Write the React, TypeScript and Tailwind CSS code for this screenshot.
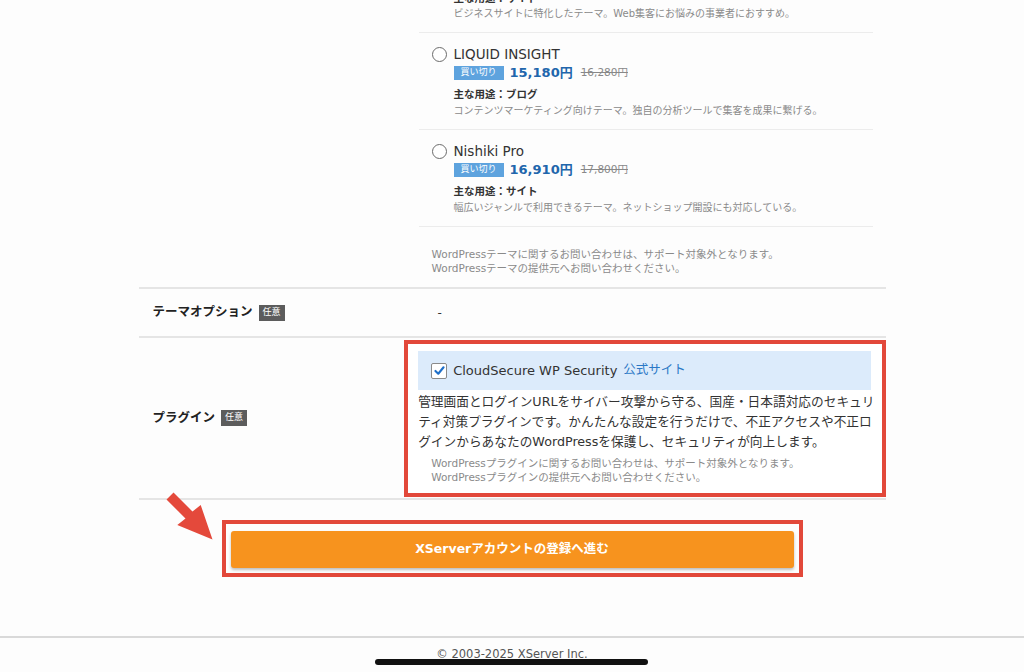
import React from "react"

const themes = [
  {
    name: "LIQUID INSIGHT",
    price: "15,180円",
    regular: "16,280円",
    use: "ブログ",
    desc: "コンテンツマーケティング向けテーマ。独自の分析ツールで集客を成果に繋げる。",
  },
  {
    name: "Nishiki Pro",
    price: "16,910円",
    regular: "17,800円",
    use: "サイト",
    desc: "幅広いジャンルで利用できるテーマ。ネットショップ開設にも対応している。",
  },
]

function OptionalBadge() {
  return (
    <span className="ml-[6px] flex h-[16px] items-center bg-[#5c5c5c] px-[4px] text-[9px] font-normal text-white">
      任意
    </span>
  )
}

function ThemeItem({
  name,
  price,
  regular,
  use,
  desc,
}: {
  name: string
  price: string
  regular: string
  use: string
  desc: string
}) {
  return (
    <div className="border-b border-[#ececec] pt-[12px] pb-[11px]">
      <div className="flex h-[18px] items-center">
        <span className="ml-[13px] h-[15px] w-[15px] rounded-full border-[1.5px] border-[#6b6b6b] bg-white" />
        <span className="ml-[7px] text-[13.5px] text-[#333]">{name}</span>
      </div>
      <div className="mt-[2px] flex h-[16px] items-center pl-[35px]">
        <span className="flex h-[14px] items-center bg-[#5ea3de] px-[7px] text-[9px] text-white">
          買い切り
        </span>
        <span className="ml-[6px] text-[13px] font-bold text-[#2166ac]">{price}</span>
        <span className="ml-[8px] text-[10.5px] text-[#888] line-through">{regular}</span>
      </div>
      <p className="mt-[6px] pl-[35px] text-[10.5px] font-bold leading-[14px] text-[#333]">
        主な用途：{use}
      </p>
      <p className="mt-[3px] pl-[35px] text-[10px] leading-[14px] text-[#8a8a8a]">{desc}</p>
    </div>
  )
}

export default function App() {
  return (
    <div
      className="relative min-h-[672px] overflow-hidden bg-[#fdfdfd]"
      style={{ fontFamily: '"DejaVu Sans", "Noto Sans CJK JP", sans-serif' }}
    >
      <div className="mx-auto w-[747px]">
        {/* theme row */}
        <div className="flex border-b-2 border-[#e5e5e5]">
          <div className="w-[280px]" />
          <div className="w-[467px] pr-[13px]">
            <div className="border-b border-[#ececec] pb-[11px]">
              <p className="-mt-[8px] pl-[35px] text-[10.5px] font-bold leading-[12px] text-[#333]">
                主な用途：サイト
              </p>
              <p className="mt-[3px] pl-[35px] text-[10px] leading-[14px] text-[#8a8a8a]">
                ビジネスサイトに特化したテーマ。Web集客にお悩みの事業者におすすめ。
              </p>
            </div>
            {themes.map((t) => (
              <ThemeItem key={t.name} {...t} />
            ))}
            <div className="pt-[20px] pb-[12px] pl-[13px] text-[10.5px] leading-[14px] text-[#8a8a8a]">
              <p>WordPressテーマに関するお問い合わせは、サポート対象外となります。</p>
              <p>WordPressテーマの提供元へお問い合わせください。</p>
            </div>
          </div>
        </div>

        {/* theme option row */}
        <div className="flex h-[49px] items-center border-b-2 border-[#e5e5e5]">
          <div className="flex w-[280px] items-center pl-[14px] text-[12.5px] font-bold text-[#222]">
            テーマオプション
            <OptionalBadge />
          </div>
          <div className="pl-[19px] text-[12px] text-[#333]">-</div>
        </div>

        {/* plugin row */}
        <div className="flex items-center border-b-2 border-[#e5e5e5]">
          <div className="flex w-[266px] items-center pl-[14px] text-[12.5px] font-bold text-[#222]">
            プラグイン
            <OptionalBadge />
          </div>
          <div className="mt-[2px] mb-[1px] w-[482px] border-4 border-[#e2483a] bg-white pt-[7px] pb-[9px]">
            <div className="ml-[10px] mr-[11px] flex h-[39px] items-center bg-[#dcebfb] pl-[13px]">
              <span className="flex h-[16px] w-[16px] items-center justify-center rounded-[2px] border border-[#8a8a8a] bg-white">
                <svg viewBox="0 0 16 16" className="h-[13px] w-[13px]">
                  <path
                    d="M3 8.5 L6.5 12 L13 4"
                    fill="none"
                    stroke="#1e6fc9"
                    strokeWidth="2.6"
                    strokeLinecap="round"
                    strokeLinejoin="round"
                  />
                </svg>
              </span>
              <span className="ml-[6px] text-[13px] text-[#333]">CloudSecure WP Security</span>
              <span className="ml-[6px] text-[12.5px] text-[#2a78c6]">公式サイト</span>
            </div>
            <p className="ml-[10px] mt-[2px] text-[12.7px] leading-[20px] text-[#333]">
              管理画面とログインURLをサイバー攻撃から守る、国産・日本語対応のセキュリ
              <br />
              ティ対策プラグインです。かんたんな設定を行うだけで、不正アクセスや不正ロ
              <br />
              グインからあなたのWordPressを保護し、セキュリティが向上します。
            </p>
            <div className="ml-[23px] mt-[4px] text-[10.5px] leading-[14px] text-[#8a8a8a]">
              <p>WordPressプラグインに関するお問い合わせは、サポート対象外となります。</p>
              <p>WordPressプラグインの提供元へお問い合わせください。</p>
            </div>
          </div>
        </div>
      </div>

      {/* submit */}
      <div className="relative mx-auto mt-[20px] w-[581px] border-4 border-[#e2483a] px-[5px] pt-[7px] pb-[5px]">
        <svg viewBox="0 0 50 50" className="absolute -left-[60px] -top-[32px] h-[50px] w-[50px]">
          <polygon
            points="7.5,0.5 26.5,19.5 34.7,13 46.5,47.5 11.3,33 19.5,26.5 0.5,7.5"
            fill="#e4493b"
          />
        </svg>
        <button className="flex h-[37px] w-full items-center justify-center rounded-[3px] bg-[#f7931e] text-[12.5px] font-bold text-white shadow-[0_2px_3px_rgba(0,0,0,0.25)]">
          XServerアカウントの登録へ進む
        </button>
      </div>

      <footer className="mt-[59px] border-t-2 border-[#d9d9d9] pt-[8px] text-center text-[11.5px] leading-[16px] text-[#555]">
        © 2003-2025 XServer Inc.
      </footer>

      <div className="absolute left-[375px] top-[659px] h-[6px] w-[273px] rounded-full bg-[#111]" />
    </div>
  )
}
